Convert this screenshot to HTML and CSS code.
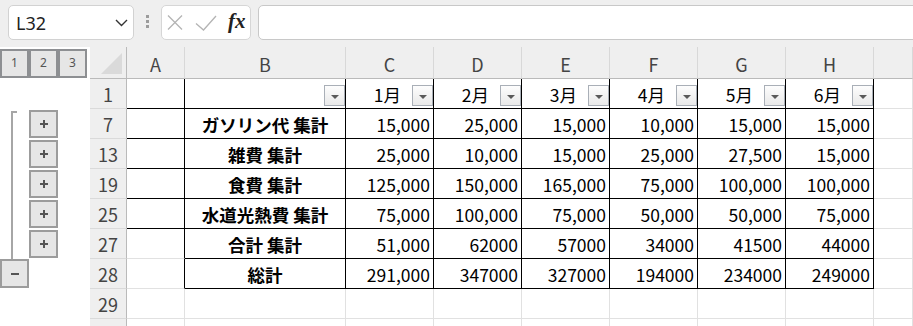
FILE: index.html
```html
<!DOCTYPE html>
<html lang="ja">
<head>
    <meta charset="UTF-8">
    <meta name="viewport" content="width=device-width, initial-scale=1.0">
    <title>集計表</title>
    <link rel="stylesheet" href="styles.css">
</head>
<body>

    <!-- Name box + formula bar -->
    <div class="toolbar">
        <div class="namebox">
            <span>L32</span>
            <svg width="13" height="8" viewBox="0 0 13 8"><polyline points="1,1 6.5,6.5 12,1" fill="none" stroke="#333" stroke-width="1.4"/></svg>
        </div>
        <div class="grip"><i></i><i></i><i></i></div>
        <div class="fxbox">
            <svg class="cancel" width="16" height="15" viewBox="0 0 16 15"><path d="M1 0.5L15 14.5M15 0.5L1 14.5" stroke="#b4b4b4" stroke-width="1.3"/></svg>
            <svg class="enter" width="22" height="16" viewBox="0 0 22 16"><polyline points="1,8.5 8.5,15 21,1" fill="none" stroke="#b4b4b4" stroke-width="1.3"/></svg>
            <span class="fx">fx</span>
        </div>
        <div class="formula"></div>
    </div>

    <div class="sheet">
        <!-- column headers -->
        <div class="row head">
            <div class="ol levels"><button>1</button><button>2</button><button>3</button></div>
            <div class="corner">
                <svg width="36" height="31" viewBox="0 0 36 31"><polygon points="11,27 32,27 32,6" fill="#dadada"/></svg>
            </div>
            <div class="ch">A</div>
            <div class="ch">B</div>
            <div class="ch">C</div>
            <div class="ch">D</div>
            <div class="ch">E</div>
            <div class="ch">F</div>
            <div class="ch">G</div>
            <div class="ch">H</div>
            <div class="ch"></div>
        </div>

        <!-- row 1 : filter header -->
        <div class="row">
            <div class="ol"></div>
            <div class="rh">1</div>
            <div class="c ar ab"></div>
            <div class="c t hd"><span class="fb"></span></div>
            <div class="c t hd"><span class="m">1月</span><span class="fb"></span></div>
            <div class="c t hd"><span class="m">2月</span><span class="fb"></span></div>
            <div class="c t hd"><span class="m">3月</span><span class="fb"></span></div>
            <div class="c t hd"><span class="m">4月</span><span class="fb"></span></div>
            <div class="c t hd"><span class="m">5月</span><span class="fb"></span></div>
            <div class="c t hd"><span class="m">6月</span><span class="fb"></span></div>
            <div class="c"></div>
        </div>

        <div class="row">
            <div class="ol"><span class="bar top"></span><button class="ob"><svg width="10" height="10" viewBox="0 0 10 10"><path d="M5 1V9M1 5H9" stroke="#555" stroke-width="2"/></svg></button></div>
            <div class="rh">7</div>
            <div class="c ar ab"></div>
            <div class="c t lbl">ガソリン代 集計</div>
            <div class="c t num">15,000</div>
            <div class="c t num">25,000</div>
            <div class="c t num">15,000</div>
            <div class="c t num">10,000</div>
            <div class="c t num">15,000</div>
            <div class="c t num">15,000</div>
            <div class="c"></div>
        </div>

        <div class="row">
            <div class="ol"><span class="bar"></span><button class="ob"><svg width="10" height="10" viewBox="0 0 10 10"><path d="M5 1V9M1 5H9" stroke="#555" stroke-width="2"/></svg></button></div>
            <div class="rh">13</div>
            <div class="c ar ab"></div>
            <div class="c t lbl">雑費 集計</div>
            <div class="c t num">25,000</div>
            <div class="c t num">10,000</div>
            <div class="c t num">15,000</div>
            <div class="c t num">25,000</div>
            <div class="c t num">27,500</div>
            <div class="c t num">15,000</div>
            <div class="c"></div>
        </div>

        <div class="row">
            <div class="ol"><span class="bar"></span><button class="ob"><svg width="10" height="10" viewBox="0 0 10 10"><path d="M5 1V9M1 5H9" stroke="#555" stroke-width="2"/></svg></button></div>
            <div class="rh">19</div>
            <div class="c ar ab"></div>
            <div class="c t lbl">食費 集計</div>
            <div class="c t num">125,000</div>
            <div class="c t num">150,000</div>
            <div class="c t num">165,000</div>
            <div class="c t num">75,000</div>
            <div class="c t num">100,000</div>
            <div class="c t num">100,000</div>
            <div class="c"></div>
        </div>

        <div class="row">
            <div class="ol"><span class="bar"></span><button class="ob"><svg width="10" height="10" viewBox="0 0 10 10"><path d="M5 1V9M1 5H9" stroke="#555" stroke-width="2"/></svg></button></div>
            <div class="rh">25</div>
            <div class="c ar ab"></div>
            <div class="c t lbl">水道光熱費 集計</div>
            <div class="c t num">75,000</div>
            <div class="c t num">100,000</div>
            <div class="c t num">75,000</div>
            <div class="c t num">50,000</div>
            <div class="c t num">50,000</div>
            <div class="c t num">75,000</div>
            <div class="c"></div>
        </div>

        <div class="row">
            <div class="ol"><span class="bar"></span><button class="ob"><svg width="10" height="10" viewBox="0 0 10 10"><path d="M5 1V9M1 5H9" stroke="#555" stroke-width="2"/></svg></button></div>
            <div class="rh">27</div>
            <div class="c ar"></div>
            <div class="c t lbl">合計 集計</div>
            <div class="c t num">51,000</div>
            <div class="c t num">62000</div>
            <div class="c t num">57000</div>
            <div class="c t num">34000</div>
            <div class="c t num">41500</div>
            <div class="c t num">44000</div>
            <div class="c"></div>
        </div>

        <div class="row">
            <div class="ol"><button class="ob minus"><svg width="10" height="4" viewBox="0 0 10 4"><path d="M1 2H9" stroke="#555" stroke-width="2"/></svg></button></div>
            <div class="rh">28</div>
            <div class="c ar"></div>
            <div class="c t lbl">総計</div>
            <div class="c t num">291,000</div>
            <div class="c t num">347000</div>
            <div class="c t num">327000</div>
            <div class="c t num">194000</div>
            <div class="c t num">234000</div>
            <div class="c t num">249000</div>
            <div class="c"></div>
        </div>

        <div class="row">
            <div class="ol"></div>
            <div class="rh">29</div>
            <div class="c"></div>
            <div class="c"></div>
            <div class="c"></div>
            <div class="c"></div>
            <div class="c"></div>
            <div class="c"></div>
            <div class="c"></div>
            <div class="c"></div>
            <div class="c"></div>
        </div>

        <!-- next row, only its top edge is on screen -->
        <div class="row">
            <div class="ol"></div>
            <div class="rh"></div>
            <div class="c"></div>
            <div class="c"></div>
            <div class="c"></div>
            <div class="c"></div>
            <div class="c"></div>
            <div class="c"></div>
            <div class="c"></div>
            <div class="c"></div>
            <div class="c"></div>
        </div>
    </div>

</body>
</html>
```

FILE: styles.css
```css
/* Page is a fixed 913x326 spreadsheet window */
body {
    margin: 0;
    width: 913px;
    height: 326px;
    overflow: hidden;
    background-color: #fff;
    font-family: "Noto Sans CJK JP", sans-serif;
    color: #000;
}

/* ---------- formula bar ---------- */
.toolbar {
    display: flex;
    height: 47px;
    padding: 5px 0 0 8px;
    box-sizing: border-box;
    background-color: #efefef;
}

.namebox {
    width: 126px;
    height: 35px;
    box-sizing: border-box;
    background-color: #fff;
    border: 1px solid #d2d2d2;
    border-radius: 5px;
    display: flex;
    align-items: center;
    justify-content: space-between;
    padding: 0 5px 0 7px;
    font-family: "Noto Sans", sans-serif;
    font-size: 18px;
    color: #222;
}

.grip {
    width: 27px;
    display: flex;
    flex-direction: column;
    align-items: center;
    padding-top: 10px;
    gap: 2px;
}

.grip i {
    width: 3px;
    height: 3px;
    background-color: #9c9c9c;
}

.fxbox {
    width: 90px;
    height: 35px;
    box-sizing: border-box;
    background-color: #fff;
    border: 1px solid #d6d6d6;
    border-radius: 5px;
    display: flex;
    align-items: center;
    padding-left: 5px;
}

.fxbox .enter {
    margin-left: 12px;
}

.fx {
    margin-left: 11px;
    font-family: "Liberation Serif", serif;
    font-style: italic;
    font-weight: bold;
    font-size: 21px;
    color: #222;
    margin-top: -2px;
}

.formula {
    flex: 1;
    margin-left: 7px;
    margin-right: -10px;
    height: 35px;
    box-sizing: border-box;
    background-color: #fff;
    border: 1px solid #c8c8c8;
    border-radius: 5px;
}

/* ---------- grid ---------- */
.row {
    display: grid;
    grid-template-columns: 90px 37px 58px 161px repeat(6, 88px) 1fr;
    height: 30px;
}

.row.head {
    height: 32px;
}

.row > div {
    box-sizing: border-box;
}

/* outline area on the left */
.ol {
    display: flex;
    background-color: #fff;
}

.levels button {
    width: 29px;
    height: 29px;
    margin-top: 2px;
    padding: 0 0 1px;
    box-sizing: border-box;
    border: 2px solid #8d8f92;
    background-color: #e6e6e6;
    display: flex;
    align-items: center;
    justify-content: center;
    font-family: "Noto Sans", sans-serif;
    font-size: 12px;
    line-height: 1;
    color: #555;
}

.bar {
    width: 6px;
    margin-left: 11px;
    margin-right: 12px;
    box-sizing: border-box;
    border-left: 2px solid #a6a6a6;
}

.bar.top {
    margin-top: 2px;
    border-top: 2px solid #a6a6a6;
}

.ob {
    width: 29px;
    height: 28px;
    margin-top: 1px;
    padding: 0;
    box-sizing: border-box;
    border: 2px solid #9c9c9c;
    background-color: #e6e6e6;
    display: flex;
    align-items: center;
    justify-content: center;
}

.ob.minus {
    height: 29px;
    margin-top: 0;
}

/* headers */
.corner {
    background-color: #efefef;
    border-right: 1px solid #bababa;
    border-bottom: 1px solid #bababa;
}

.corner svg {
    display: block;
}

.ch {
    background-color: #efefef;
    border-right: 1px solid #d8d8d8;
    border-bottom: 1px solid #bababa;
    display: flex;
    align-items: center;
    justify-content: center;
    font-size: 18px;
    color: #444;
    padding-top: 2px;
}

.rh {
    background-color: #efefef;
    border-right: 1px solid #bababa;
    border-bottom: 1px solid #dadada;
    display: flex;
    align-items: center;
    justify-content: center;
    font-size: 18px;
    color: #444;
    padding-top: 1px;
}

/* cells */
.c {
    border-right: 1px solid #e1e1e1;
    border-bottom: 1px solid #e1e1e1;
    display: flex;
    align-items: center;
    font-size: 17.5px;
    line-height: 1;
    padding-top: 2px;
    white-space: nowrap;
}

.c.t {
    border-color: #000;
}

.c.ar {
    border-right-color: #000;
}

.c.ab {
    border-bottom-color: #000;
}

.num {
    justify-content: flex-end;
    padding-right: 3px;
}

.lbl {
    justify-content: center;
    font-weight: bold;
}

/* filter header row */
.hd {
    justify-content: flex-end;
}

.hd .m {
    margin-right: 11px;
}

.fb {
    align-self: flex-end;
    width: 21px;
    height: 21px;
    margin-bottom: 2px;
    box-sizing: border-box;
    border: 1px solid #a9afb7;
    background: linear-gradient(#fdfdfd, #e9e9e9);
    display: flex;
    align-items: center;
    justify-content: center;
}

.fb::after {
    content: "";
    margin-top: 2px;
    border-left: 4px solid transparent;
    border-right: 4px solid transparent;
    border-top: 4px solid #5a5a5a;
}
```
